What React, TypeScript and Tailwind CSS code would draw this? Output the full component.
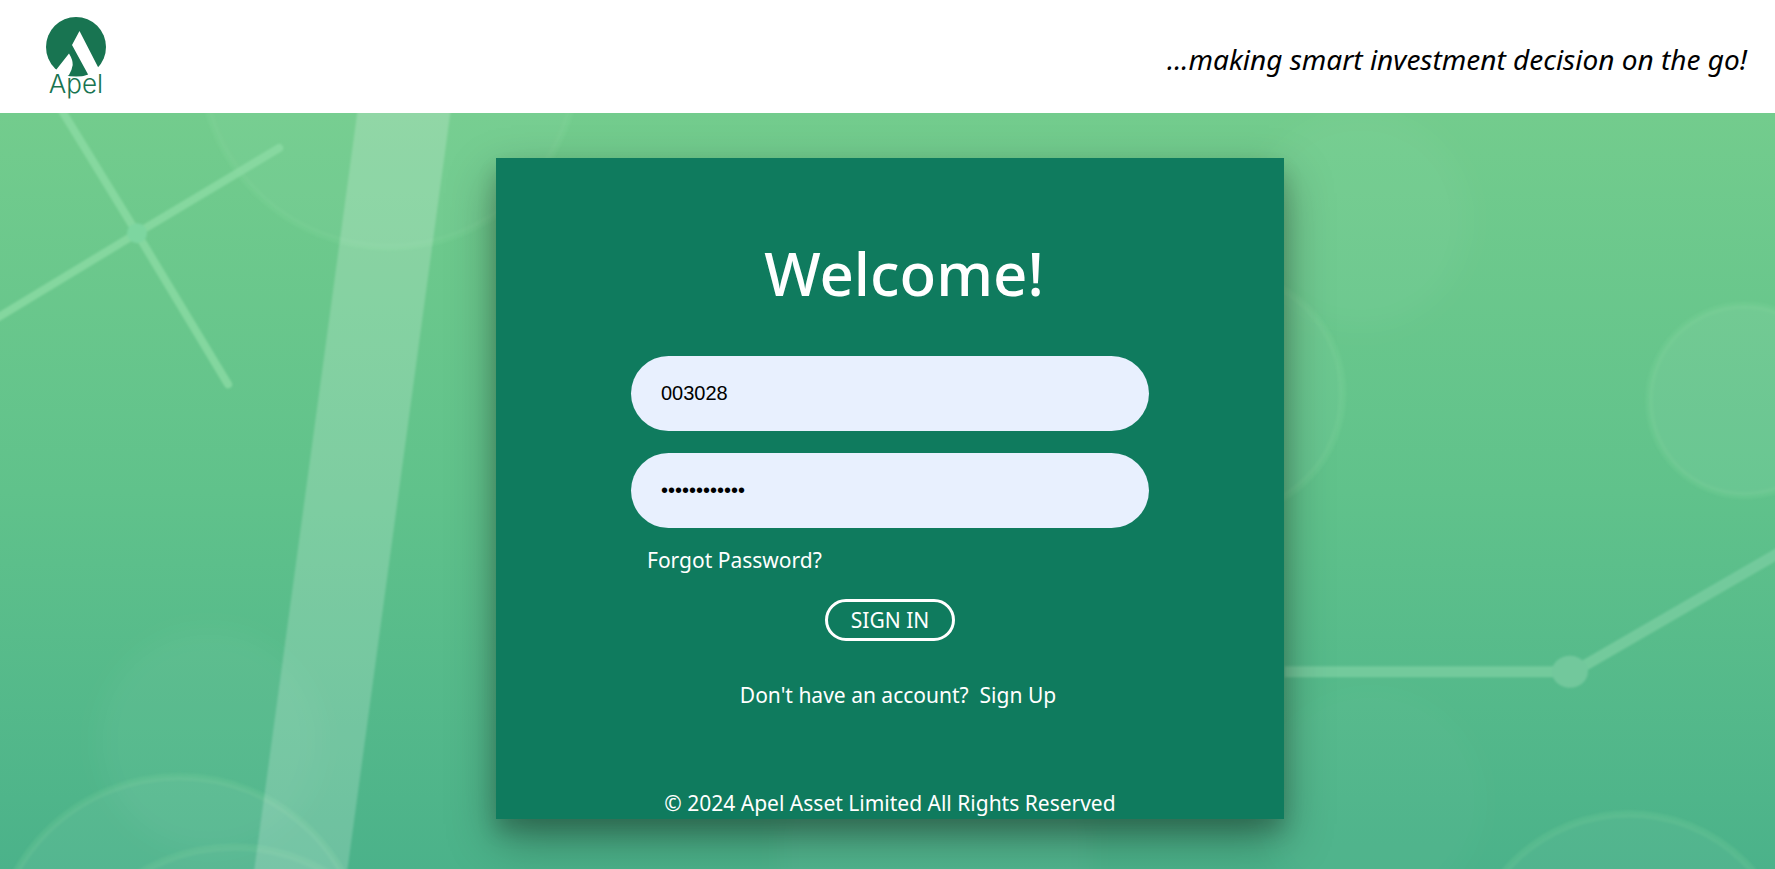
import React from "react";

function Backdrop() {
  return (
    <svg
      aria-hidden="true"
      className="absolute inset-0 h-full w-full"
      viewBox="0 113 1775 756"
      preserveAspectRatio="xMidYMid slice"
      fill="none"
    >
      <defs>
        <linearGradient id="field" x1="0" y1="0" x2="0" y2="1">
          <stop offset="0" stopColor="#73cc8d" />
          <stop offset="0.5" stopColor="#60c28b" />
          <stop offset="1" stopColor="#4bb28a" />
        </linearGradient>
        <filter id="soft" x="-20%" y="-20%" width="140%" height="140%">
          <feGaussianBlur stdDeviation="12" />
        </filter>
        <filter id="edge" x="-5%" y="-5%" width="110%" height="110%">
          <feGaussianBlur stdDeviation="1" />
        </filter>
      </defs>
      <rect y="113" width="1775" height="756" fill="url(#field)" />
      <g fill="#fff" fillOpacity="0.035" filter="url(#soft)">
        <circle cx="210" cy="740" r="110" />
        <circle cx="1360" cy="220" r="108" fillOpacity="0.03" />
        <circle cx="1370" cy="800" r="110" fillOpacity="0.02" />
        <circle cx="935" cy="850" r="155" />
      </g>
      <g
        fill="#fff"
        fillOpacity="0.03"
        stroke="#8fdc9f"
        strokeOpacity="0.15"
        strokeWidth="7"
        filter="url(#edge)"
      >
        <circle cx="390" cy="59" r="188" />
        <circle cx="180" cy="963" r="187" fillOpacity="0.05" />
        <circle cx="235" cy="1030" r="184" />
        <circle cx="1221" cy="393" r="121" />
        <circle cx="1743" cy="400" r="95" fillOpacity="0.06" />
        <circle cx="1628" cy="976" r="163" />
      </g>
      <g filter="url(#edge)">
        <path d="M359 105H452L347 877H254Z" fill="#fff" fillOpacity="0.19" />
        <path
          d="M62 109 138 233 229 384M-4 319 138 233 280 148"
          stroke="#8edca6"
          strokeOpacity="0.75"
          strokeWidth="8"
          strokeLinecap="round"
        />
        <circle cx="138" cy="233" r="10" fill="#7dd6a0" />
        <path d="M1284 671H1560M1578 668 1780 551" stroke="#73ca9c" strokeWidth="11" />
        <ellipse cx="1569" cy="671" rx="18" ry="16" fill="#72c89c" />
      </g>
    </svg>
  );
}

function Logo() {
  return (
    <svg role="img" aria-label="Apel" className="h-[92px] w-[76px]" viewBox="38 10 76 92">
      <circle cx="76" cy="46" r="30" fill="#187451" />
      <path d="M79.500 30 72 44 87 71.500 91 79 106 73 98 66Z" fill="#fff" />
      <path d="M46 84 56 69 69 52.500Q73 59 72.700 64Q72 69 69 74L66 76 62 84Z" fill="#fff" />
      <path d="M50 75.500H104V84H50Z" fill="#fff" />
      <text
        x="76"
        y="92"
        textAnchor="middle"
        fontFamily="Inter, sans-serif"
        fontWeight="300"
        fontSize="26"
        fill="#187451"
      >
        Apel
      </text>
    </svg>
  );
}

const fieldClass =
  "h-[75px] w-full rounded-full bg-[#e8f0fe] px-[30px] font-['Liberation_Sans',sans-serif] text-[20px] text-black outline-none focus:ring-2 focus:ring-white";

export default function App() {
  return (
    <div className="flex min-h-screen flex-col font-['Noto_Sans',sans-serif]">
      <header className="flex h-[113px] items-center justify-between bg-white pr-7 pl-[38px]">
        <a href="#home">
          <Logo />
        </a>
        <p className="pt-1 text-[28px] text-black italic">...making smart investment decision on the go!</p>
      </header>

      <main className="relative flex flex-1 items-start justify-center overflow-hidden pt-[45px] pb-[51px] pl-[5px]">
        <Backdrop />
        <section className="relative flex w-full max-w-[788px] flex-col items-center bg-[#0f7b5e] pt-[70px] text-[21px] leading-[30px] text-white shadow-[0_12px_18px_rgba(0,0,0,0.15),0_20px_44px_rgba(0,0,0,0.35)]">
          <h1 className="pl-7 text-[60px] leading-[90px] font-medium">Welcome!</h1>
          <form className="flex w-full max-w-[518px] flex-col items-center pt-[38px]" onSubmit={(e) => e.preventDefault()}>
            <input aria-label="User ID" type="text" defaultValue="003028" className={fieldClass} />
            <input aria-label="Password" type="password" defaultValue="passwordpass" className={`mt-[22px] ${fieldClass}`} />
            <a href="#forgot" className="mt-[17px] self-start pl-4">
              Forgot Password?
            </a>
            <button type="submit" className="mt-6 h-[42px] w-[130px] rounded-full border-3 border-white leading-9">
              SIGN IN
            </button>
          </form>
          <p className="mt-[39px] pl-4">
            Don't have an account?&nbsp; <a href="#signup">Sign Up</a>
          </p>
          <footer className="pt-[78px] pb-px">© 2024 Apel Asset Limited All Rights Reserved</footer>
        </section>
      </main>
    </div>
  );
}
